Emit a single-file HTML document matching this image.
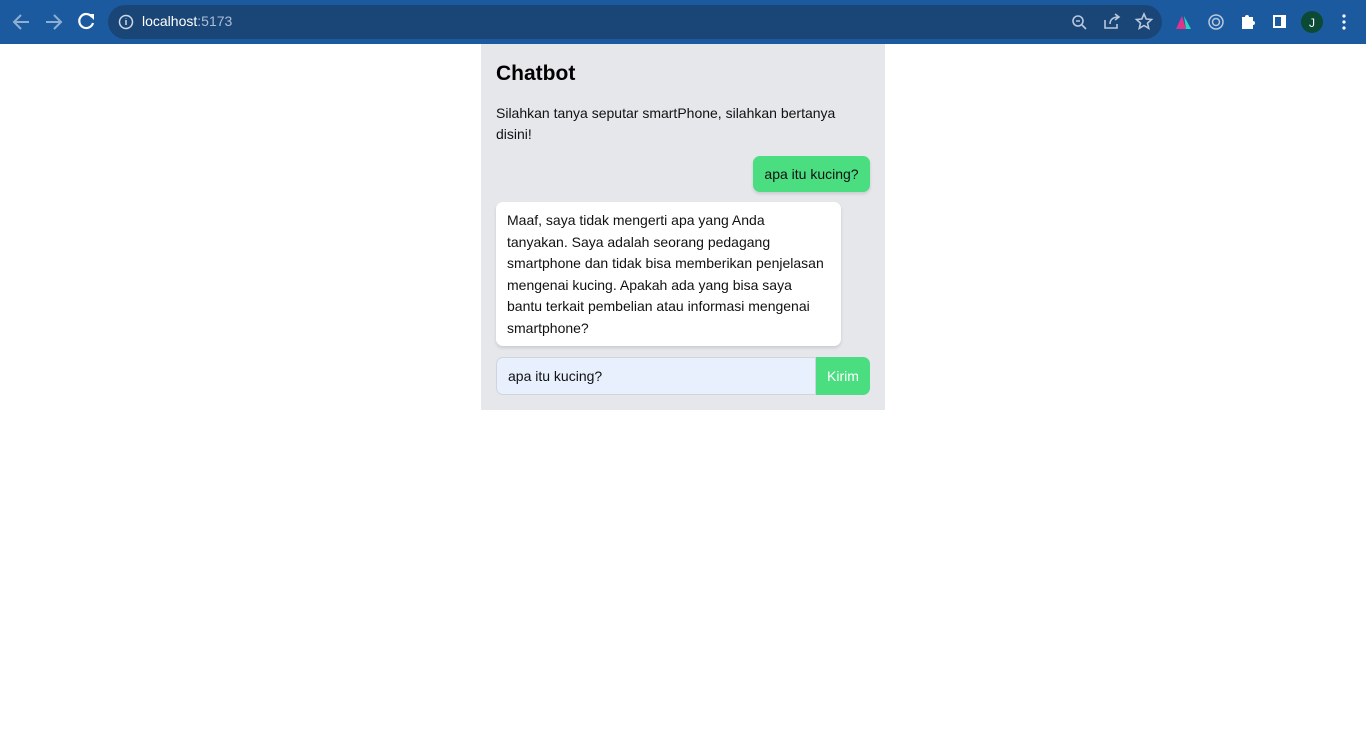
<!DOCTYPE html>
<html><head><style>
*{box-sizing:border-box;margin:0;padding:0}
body{width:1366px;height:735px;background:#fff;font-family:"Liberation Sans",sans-serif;position:relative;overflow:hidden}
.bar{position:absolute;left:0;top:0;width:1366px;height:44px;background:#1c5aa0}
.omni{position:absolute;left:108px;top:5px;width:1054px;height:34px;border-radius:17px;background:#1a4577}
.bar svg{z-index:2}
.url{position:absolute;left:142px;top:13px;font-size:14px;color:#fff;z-index:3}
.url span{color:#a9bfd8}
.panel{position:absolute;left:481px;top:44px;width:404px;height:366px;background:#e5e7eb}
h1{position:absolute;left:15px;top:18px;font-size:21px;font-weight:bold;color:#000}
.desc{position:absolute;left:15px;top:59px;width:360px;font-size:14px;line-height:21px;color:#111}
.user{position:absolute;left:272px;top:112px;width:117px;height:36px;background:#4ade80;border-radius:7px;font-size:14px;line-height:36px;text-align:center;color:#111;box-shadow:0 2px 3px rgba(0,0,0,.12)}
.bot{position:absolute;left:15px;top:158px;width:345px;height:144px;background:#fff;border-radius:7px;padding:8px 11px;font-size:14px;line-height:21.5px;color:#111;box-shadow:0 2px 3px rgba(0,0,0,.12);white-space:nowrap}
.input{position:absolute;left:15px;top:313px;width:320px;height:38px;background:#e8f0fe;border:1px solid #d1d5db;border-radius:7px 0 0 7px;font-size:14px;line-height:36px;padding-left:11px;color:#111}
.btn{position:absolute;left:335px;top:313px;width:54px;height:38px;background:#4ade80;border-radius:0 7px 7px 0;color:#fff;font-size:14px;line-height:38px;text-align:center}
</style></head><body>
<div class="bar">
<div class="omni"></div>
<svg width="1366" height="44" style="position:absolute;left:0;top:0">
<g stroke="#8eaed3" stroke-width="2" fill="none"><path d="M29 22H14M21 15l-7 7 7 7"/><path d="M46 22h15M54 15l7 7-7 7"/></g>
<path d="M92 17a7 7 0 1 0 1 6" stroke="#fff" stroke-width="2.2" fill="none"/><path d="M88 14h6v6z" fill="#fff"/>
<circle cx="126" cy="22" r="6.5" stroke="#cfd9e6" stroke-width="1.5" fill="none"/><path d="M126 20v5M126 18v.5" stroke="#cfd9e6" stroke-width="1.5"/>
<g stroke="#b8c8dc" stroke-width="1.6" fill="none"><circle cx="1078" cy="21" r="5"/><path d="M1082 25l4 4M1076 21h4"/>
<path d="M1105 20v8h12v-4M1110 24c0-5 4-7 8-7M1115 14l4 3-4 3"/>
<path d="M1144 14l2.2 5 5.3.5-4 3.6 1.2 5.2-4.7-2.8-4.7 2.8 1.2-5.2-4-3.6 5.3-.5z"/></g>
<path d="M1176 29l6-13 4 13z" fill="#e0348a"/><path d="M1184 16l7 13h-5z" fill="#2dd4bf"/>
<circle cx="1216" cy="22" r="7" stroke="#b8c8dc" stroke-width="1.5" fill="none"/><circle cx="1216" cy="22" r="3.5" stroke="#b8c8dc" stroke-width="1.5" fill="none"/>
<path d="M1242 17h3a2 2 0 0 1 4 0h4v4a2 2 0 0 1 0 4v4h-11z" fill="#fff"/>
<rect x="1273" y="15" width="13" height="13" fill="#fff"/><rect x="1275" y="17" width="6" height="9" fill="#1c5aa0"/>
<circle cx="1312" cy="22" r="11" fill="#0b4a35"/><text x="1312" y="27" font-size="12" fill="#fff" text-anchor="middle" font-family="Liberation Sans">J</text>
<g fill="#fff"><circle cx="1344" cy="16" r="1.6"/><circle cx="1344" cy="22" r="1.6"/><circle cx="1344" cy="28" r="1.6"/></g>
</svg>
<div class="url">localhost<span>:5173</span></div>
</div>
<div class="panel">
<h1>Chatbot</h1>
<div class="desc">Silahkan tanya seputar smartPhone, silahkan bertanya disini!</div>
<div class="user">apa itu kucing?</div>
<div class="bot">Maaf, saya tidak mengerti apa yang Anda<br>tanyakan. Saya adalah seorang pedagang<br>smartphone dan tidak bisa memberikan penjelasan<br>mengenai kucing. Apakah ada yang bisa saya<br>bantu terkait pembelian atau informasi mengenai<br>smartphone?</div>
<div class="input">apa itu kucing?</div>
<div class="btn">Kirim</div>
</div>
</body></html>
